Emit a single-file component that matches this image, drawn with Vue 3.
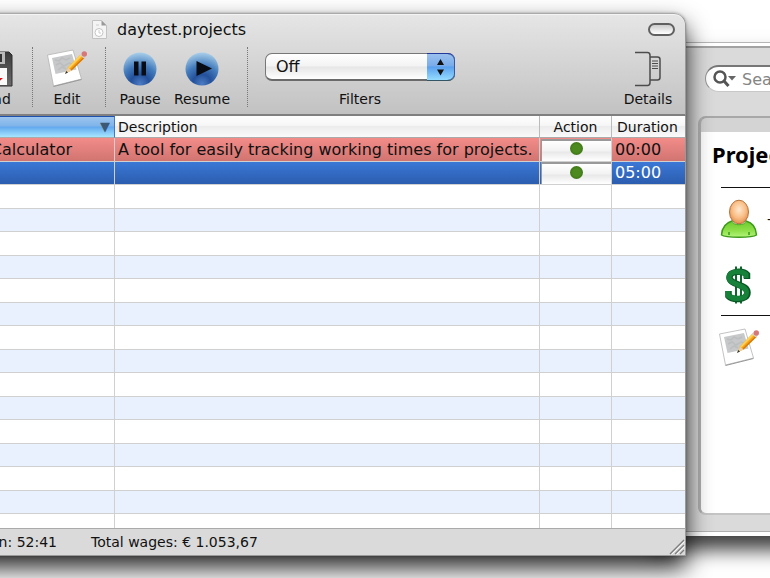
<script setup>
import { ref } from 'vue'

const filter = ref('Off')
const search = ref('')
const rows = [
  { name: 'Calculator', text: 'A tool for easily tracking working times for projects.', time: '00:00', kind: 'red' },
  { name: '', text: '', time: '05:00', kind: 'selected' },
  ...Array.from({ length: 15 }, () => ({ name: '', text: '', time: '', kind: '' })),
]
</script>

<template>
  <div class="desktop">
    <svg class="defs" width="0" height="0" aria-hidden="true">
      <defs>
        <radialGradient id="orb" cx=".5" cy=".95" r=".95">
          <stop offset="0" stop-color="#4c7cc4" />
          <stop offset=".3" stop-color="#24509a" />
          <stop offset=".6" stop-color="#457dbd" />
          <stop offset="1" stop-color="#a9cfea" />
        </radialGradient>
        <radialGradient id="skin" cx=".5" cy=".4" r=".6">
          <stop offset="0" stop-color="#ffe9cf" />
          <stop offset=".6" stop-color="#f9bd85" />
          <stop offset="1" stop-color="#e08f4c" />
        </radialGradient>
        <linearGradient id="shirt" x1="0" y1="0" x2="0" y2="1">
          <stop offset="0" stop-color="#6cc92c" />
          <stop offset=".6" stop-color="#8fe04a" />
          <stop offset="1" stop-color="#b4f57c" />
        </linearGradient>
        <linearGradient id="floppy" x1="0" y1="0" x2="0" y2="1">
          <stop offset="0" stop-color="#3a3a3a" />
          <stop offset="1" stop-color="#6c6c6c" />
        </linearGradient>
        <symbol id="note" viewBox="0 0 42 40">
          <path d="M1.5 6 27 1l8.500 29L7.500 37Z" fill="#fff" stroke="#b4b4b4" stroke-width=".8" />
          <path d="M7.500 37.500 35.500 30.500" stroke="#999" stroke-width="1" />
          <path d="M6 9 26 5l4.500 15.500L9.500 25Z" fill="#c6c8c9" />
          <path d="M9 11l4 1 3-3 4 2 4-2M10 16l4-2 4 3 5-3 3 1M12 21l4-3 4 2" fill="none" stroke="#bbbebf" stroke-width="1.500" />
          <path d="M19.500 24.500 22 18.500 35 5l4 3.500L25.500 21.500Z" fill="#f6a51b" />
          <path d="M22 18.500 35 5l1.600 1.400L23.500 19.500Z" fill="#ffd154" />
          <path d="M25.500 21.500 39 8.500l-1-1L24.500 20.500Z" fill="#d97a0a" />
          <path d="M19.500 24.500 22 18.500l3.500 3Z" fill="#ecd0a0" />
          <path d="M19 25l1.200-3 1.800 1.600Z" fill="#333" />
          <path d="M34 6l2-2 4 3.500-2 2Z" fill="#d5d5dc" />
          <circle cx="38.300" cy="5" r="2.700" fill="#d77878" />
        </symbol>
      </defs>
    </svg>

    <section class="back">
      <div class="search-row">
        <label class="search">
          <svg width="26" height="20" viewBox="0 0 26 20" aria-hidden="true">
            <circle cx="8" cy="8" r="5.500" fill="none" stroke="#555" stroke-width="2.500" />
            <path d="m12 12 4.500 5" stroke="#555" stroke-width="3" />
            <path d="M16 7h8l-4 4.500Z" fill="#666" />
          </svg>
          <input v-model="search" type="search" placeholder="Search" aria-label="Search">
        </label>
      </div>
      <div class="panel">
        <div class="sheet">
          <h2>Project</h2>
          <div class="group">
            <div class="entry">
              <svg width="38" height="40" viewBox="0 0 38 40" aria-hidden="true">
                <path d="M1.500 36C2 27 7 23.500 12 22h14c6 1.500 10 5 10.500 14-4 3-31 3-35 0Z" fill="url(#shirt)" stroke="#3d9a1b" stroke-width="1.500" />
                <path d="M12 22c1 5 13 5 14 0l-2-3H14Z" fill="#e9eef0" stroke="#4ba523" />
                <path d="M9 36v-3M29 36v-3" stroke="#3d9a1b" stroke-width="1.500" />
                <ellipse cx="19" cy="13" rx="9.500" ry="11.800" fill="url(#skin)" stroke="#b87237" />
              </svg>
              <span>-</span>
            </div>
            <div class="entry">
              <svg width="38" height="40" viewBox="0 0 38 40" aria-hidden="true">
                <g fill="none">
                  <path d="M16 1.500v37M21 1.500v37" stroke="#0a6a2c" stroke-width="2" />
                  <path d="M27 14V9.500C24 6 9.500 5 9.500 12.500S27.500 19 27.500 27.500 12 35 8.500 31V26" stroke="#0a5525" stroke-width="6.500" />
                  <path d="M26 13V9.500C23 6 9 5 9 12.500S26.500 19 26.500 27.500 12 34 8 30.500V26" stroke="#168239" stroke-width="5" />
                </g>
              </svg>
            </div>
          </div>
          <div class="memo">
            <svg width="42" height="40" aria-hidden="true"><use href="#note" /></svg>
          </div>
        </div>
      </div>
    </section>

    <main class="window">
      <header class="chrome">
        <div class="title">
          <svg width="15" height="19" viewBox="0 0 15 19" aria-hidden="true">
            <path d="M.5.500h9l5 5v13H.5Z" fill="#f4f4f4" stroke="#c2c2c2" />
            <path d="M9.500.500v5h5Z" fill="#999" />
            <circle cx="7" cy="12.500" r="4" fill="#fff" stroke="#c4c4c4" />
            <path d="M4 5h3M7 10v3h2" stroke="#ccc" fill="none" />
          </svg>
          <h1>daytest.projects</h1>
          <button class="pill" aria-label="Toggle toolbar"></button>
        </div>
        <div class="toolbar">
          <button class="tool first">
            <svg width="38" height="38" viewBox="0 0 38 38" aria-hidden="true">
              <path d="M1 2h33l3 3v31H1Z" fill="url(#floppy)" stroke="#2e2e2e" />
              <path d="M8 2h22v12H8Z" fill="#b9b9b9" />
              <path d="M22 4h5v8h-5Z" fill="#333" />
              <path d="M5 18h27v17H5Z" fill="#fafafa" />
              <path d="M8 22h17" stroke="#c8c8c8" />
              <path d="M15 22h9v6h4l-8.500 8L11 28h4Z" fill="#d8141c" />
            </svg>
            <span>Load</span>
          </button>
          <i class="divider"></i>
          <button class="tool edit">
            <svg width="42" height="40" aria-hidden="true"><use href="#note" /></svg>
            <span>Edit</span>
          </button>
          <i class="divider"></i>
          <button class="tool pause">
            <svg width="34" height="36" viewBox="0 0 34 36" aria-hidden="true">
              <circle cx="17" cy="18" r="16.500" fill="url(#orb)" />
              <path d="M11 10.500h4.500v14H11ZM18.500 10.500H23v14h-4.500Z" fill="#080c14" />
            </svg>
            <span>Pause</span>
          </button>
          <button class="tool resume">
            <svg width="34" height="36" viewBox="0 0 34 36" aria-hidden="true">
              <circle cx="17" cy="18" r="16.500" fill="url(#orb)" />
              <path d="M11.500 10 27 17.500l-15.500 7.500Z" fill="#080c14" />
            </svg>
            <span>Resume</span>
          </button>
          <i class="divider"></i>
          <div class="filter">
            <div class="popup">
              <select id="filters" v-model="filter">
                <option>Off</option>
                <option>On</option>
              </select>
              <svg class="cap" width="28" height="26" viewBox="0 0 28 26" aria-hidden="true">
                <path d="M10 11h7l-3.500-6ZM10 15.500h7l-3.500 6Z" fill="#111" />
              </svg>
            </div>
            <label for="filters">Filters</label>
          </div>
          <button class="tool details">
            <svg width="28" height="36" viewBox="0 0 28 36" aria-hidden="true">
              <g fill="none" stroke="#4c4c4c" stroke-width="1.500">
                <path d="M1 1.500h12.500q2.500 0 2.500 3v27q0 3-2.500 3H1" />
                <path d="M16 6h7.500q2.500 0 2.500 2.500v18q0 2.500-2.500 2.500H16" />
                <path d="M18 10h6M18 12.500h6M18 15h6M18 17.500h6" stroke-width="1.200" />
              </g>
            </svg>
            <span>Details</span>
          </button>
        </div>
      </header>

      <div class="list">
        <table>
          <colgroup>
            <col class="c-name"><col><col class="c-action"><col class="c-time">
          </colgroup>
          <thead>
            <tr>
              <th class="sorted" aria-label="Name"><span>▼</span></th>
              <th>Description</th>
              <th class="center">Action</th>
              <th class="time">Duration</th>
            </tr>
          </thead>
          <tbody>
            <tr v-for="(row, i) in rows" :key="i" :class="row.kind">
              <td class="name">{{ row.name }}</td>
              <td>{{ row.text }}</td>
              <td class="action">
                <button v-if="row.time" aria-label="Start"><i></i></button>
              </td>
              <td>{{ row.time }}</td>
            </tr>
          </tbody>
        </table>
      </div>

      <footer class="status">
        <span class="sum">Duration: 52:41</span>
        <span>Total wages: € 1.053,67</span>
        <svg class="grip" width="16" height="16" viewBox="0 0 16 16" aria-hidden="true">
          <path d="M1 15 15 1M6 15l9-9M11 15l4-4" stroke="#7c7c7c" stroke-width="1.300" />
          <path d="M2.500 15.500 15.500 2.500M7.500 15.500l8-8" stroke="#fff" stroke-width=".8" />
        </svg>
      </footer>
    </main>
  </div>
</template>

<style>
body {
  margin: 0;
}
</style>

<style scoped>
.desktop {
  position: relative;
  height: 100vh;
  overflow: hidden;
  background: #fff;
  color: #111;
  font-family: "DejaVu Sans", "Noto Sans", sans-serif;
  font-size: 14px;
}

.defs {
  position: absolute;
}

button {
  padding: 0;
  border: 0;
  background: none;
  color: inherit;
  font: inherit;
}

/* Window behind */
.back {
  position: absolute;
  inset: 42px -160px 42px auto;
  width: 280px;
  box-sizing: border-box;
  display: flex;
  flex-direction: column;
  padding: 22px 0 21px 48px;
  border-top: 1px solid #b5b5b5;
  background: #dadada;
  box-shadow: inset 0 3px #fff, inset 0 5px #a2a2a2, inset 0 -4px #fff, inset 0 -5px #b0b0b0, 0 14px 18px rgba(0, 0, 0, 0.75);
}

.search-row {
  padding-left: 7px;
}

.search {
  display: flex;
  align-items: center;
  gap: 4px;
  height: 24px;
  padding-left: 6px;
  border: 1px solid #969696;
  border-top: 2px solid #777;
  border-bottom-color: #c8c8c8;
  border-radius: 14px;
  background: #fff;
}

.search input {
  width: 100px;
  padding: 0;
  border: 0;
  outline: 0;
  background: none;
  font: inherit;
  font-size: 16px;
}

.search input::placeholder {
  color: #858585;
}

.panel {
  flex: 1;
  display: flex;
  flex-direction: column;
  margin-top: 24px;
  padding-top: 14px;
  border: 2px solid #a8a8a8;
  border-left: 3px solid #b0b0b0;
  border-bottom-color: #c4c4c4;
  border-radius: 8px;
  background: #d4d4d4;
}

.sheet {
  flex: 1;
  padding: 7px 0 0 11px;
  border-radius: 0 0 0 5px;
  background: #fff;
}

h2 {
  margin: 0;
  color: #000;
  font-family: "Noto Sans", sans-serif;
  font-size: 22px;
  line-height: 30px;
}

.group {
  display: flex;
  flex-direction: column;
  gap: 26px;
  margin: 18px 0 0 9px;
  padding: 11px 0 10px;
  border-top: 1px solid #111;
  border-bottom: 1px solid #111;
}

.entry {
  display: flex;
  align-items: center;
  gap: 9px;
}

.entry svg {
  margin-left: -1px;
}

.memo {
  margin: 12px 0 0 6px;
}

.entry svg,
.memo svg {
  display: block;
}

/* Front window */
.window {
  position: absolute;
  inset: 13px 84px 22px -100px;
  display: flex;
  flex-direction: column;
  border-radius: 0 12px 0 0;
  background: #fff;
  box-shadow: 0 12px 24px rgba(0, 0, 0, 0.85), 0 0 3px rgba(0, 0, 0, 0.3);
}

.chrome {
  box-sizing: border-box;
  border-top: 1px solid #aaa;
  border-right: 1px solid #999;
  border-bottom: 2px solid #808080;
  border-radius: 0 12px 0 0;
  background: linear-gradient(#e6e6e6, #c2c2c2);
  box-shadow: inset 0 1px #f4f4f4;
}

.title {
  display: flex;
  align-items: center;
  gap: 10px;
  height: 30px;
  padding: 0 10px 0 192px;
}

h1 {
  margin: 0;
  font-size: 16px;
  font-weight: 400;
}

.pill {
  width: 27px;
  height: 13px;
  margin-left: auto;
  border: 2px solid #606060;
  border-radius: 7px;
  background: linear-gradient(#ccc, #fff);
}

.toolbar {
  display: flex;
  align-items: flex-start;
  height: 70px;
  padding: 0 7px 0 74px;
}

.tool {
  display: flex;
  flex-direction: column;
  align-items: center;
  height: 66px;
  padding-top: 5px;
  box-sizing: border-box;
}

.tool svg {
  flex: none;
  height: 40px;
}

.tool span,
.filter label {
  line-height: 20px;
}

.first {
  width: 40px;
}

.divider {
  align-self: flex-start;
  height: 60px;
  margin-top: 3px;
  border-left: 1px dotted #777;
}

.first + .divider {
  margin-left: 18px;
}

.edit {
  width: 68px;
  margin-right: 4px;
}

.pause {
  width: 68px;
}

.resume {
  width: 56px;
}

.resume + .divider {
  margin-left: 17px;
}

.filter {
  display: flex;
  flex-direction: column;
  align-items: center;
  gap: 8px;
  margin-left: 17px;
  padding-top: 9px;
}

.popup {
  position: relative;
  width: 190px;
  height: 28px;
}

select {
  width: 100%;
  height: 28px;
  padding: 0 10px;
  appearance: none;
  border: 1px solid #777;
  border-bottom: 2px solid #6a6a6a;
  border-radius: 7px;
  background: linear-gradient(#fff, #f3f3f3 48%, #e6e6e6 52%, #fff);
  color: #111;
  font: inherit;
  font-size: 16px;
}

.cap {
  position: absolute;
  inset: 0 0 auto auto;
  border-top: 1px solid #23399c;
  border-bottom: 1px solid #356;
  border-radius: 0 7px 7px 0;
  background: linear-gradient(#9bc1ee, #79acea 45%, #5aa1ee 50%, #96dbff);
  box-shadow: inset -1px 0 #3559a8;
  pointer-events: none;
}

.details {
  margin-left: auto;
  width: 60px;
}

.list {
  flex: 1;
  min-height: 0;
  overflow: hidden;
  border-right: 1px solid #999;
}

table {
  width: 100%;
  table-layout: fixed;
  border-collapse: separate;
  border-spacing: 0;
}

.c-name {
  width: 215px;
}

.c-action {
  width: 72px;
}

.c-time {
  width: 73px;
}

th {
  box-sizing: border-box;
  height: 22px;
  padding: 0 3px;
  border-right: 1px solid #bbb;
  border-bottom: 1px solid #aaa;
  background: linear-gradient(#fff, #f6f6f6 45%, #ececec 50%, #fafafa);
  font-weight: 400;
  line-height: 20px;
  text-align: left;
  white-space: nowrap;
}

th.center {
  text-align: center;
}

th.time {
  padding-left: 5px;
}

th.sorted {
  padding-right: 4px;
  border-top: 1px solid #2050ae;
  border-right-color: #4079c8;
  background: linear-gradient(#9cc4ee, #7fb4ea 45%, #62a8ee 50%, #a6e6ff);
  color: #3c5873;
  font-size: 13px;
  line-height: 18px;
  text-align: right;
}

td {
  box-sizing: border-box;
  height: 24px;
  padding: 0 3px;
  border-right: 1px solid #d0d0d0;
  border-bottom: 1px solid #d0d0d0;
  font-size: 16px;
  line-height: 22px;
  white-space: nowrap;
}

tr:nth-child(even) td {
  height: 23px;
  background: #eaf1fe;
}

th:last-child,
td:last-child {
  border-right: 0;
}

td.name {
  padding-right: 42px;
  text-align: right;
}

tbody tr.red td {
  background: linear-gradient(#f28c89, #d17470);
}

tbody tr.selected td {
  background: linear-gradient(#3b78d6, #2b5daf);
  color: #fff;
}

tbody tr td.action {
  padding: 0 0 0 1px;
}

td.action button {
  display: flex;
  align-items: center;
  justify-content: center;
  width: 100%;
  height: 22px;
  padding-bottom: 4px;
  box-sizing: border-box;
  border-top: 2px solid #999;
  border-left: 1px solid #999;
  background: linear-gradient(#fff, #f2f2f2 50%, #e8e8e8 55%, #fff);
}

td.action i {
  width: 13px;
  height: 13px;
  border-radius: 50%;
  background: radial-gradient(#4c8a20 40%, #33640f);
}

.status {
  position: relative;
  display: flex;
  align-items: center;
  gap: 34px;
  height: 25px;
  padding-bottom: 1px;
  border-top: 1px solid #aaa;
  border-right: 1px solid #999;
  border-bottom: 1px solid #999;
  background: #dadada;
}

.sum {
  width: 157px;
  text-align: right;
}

.grip {
  position: absolute;
  right: 0;
  bottom: 0;
}
</style>
